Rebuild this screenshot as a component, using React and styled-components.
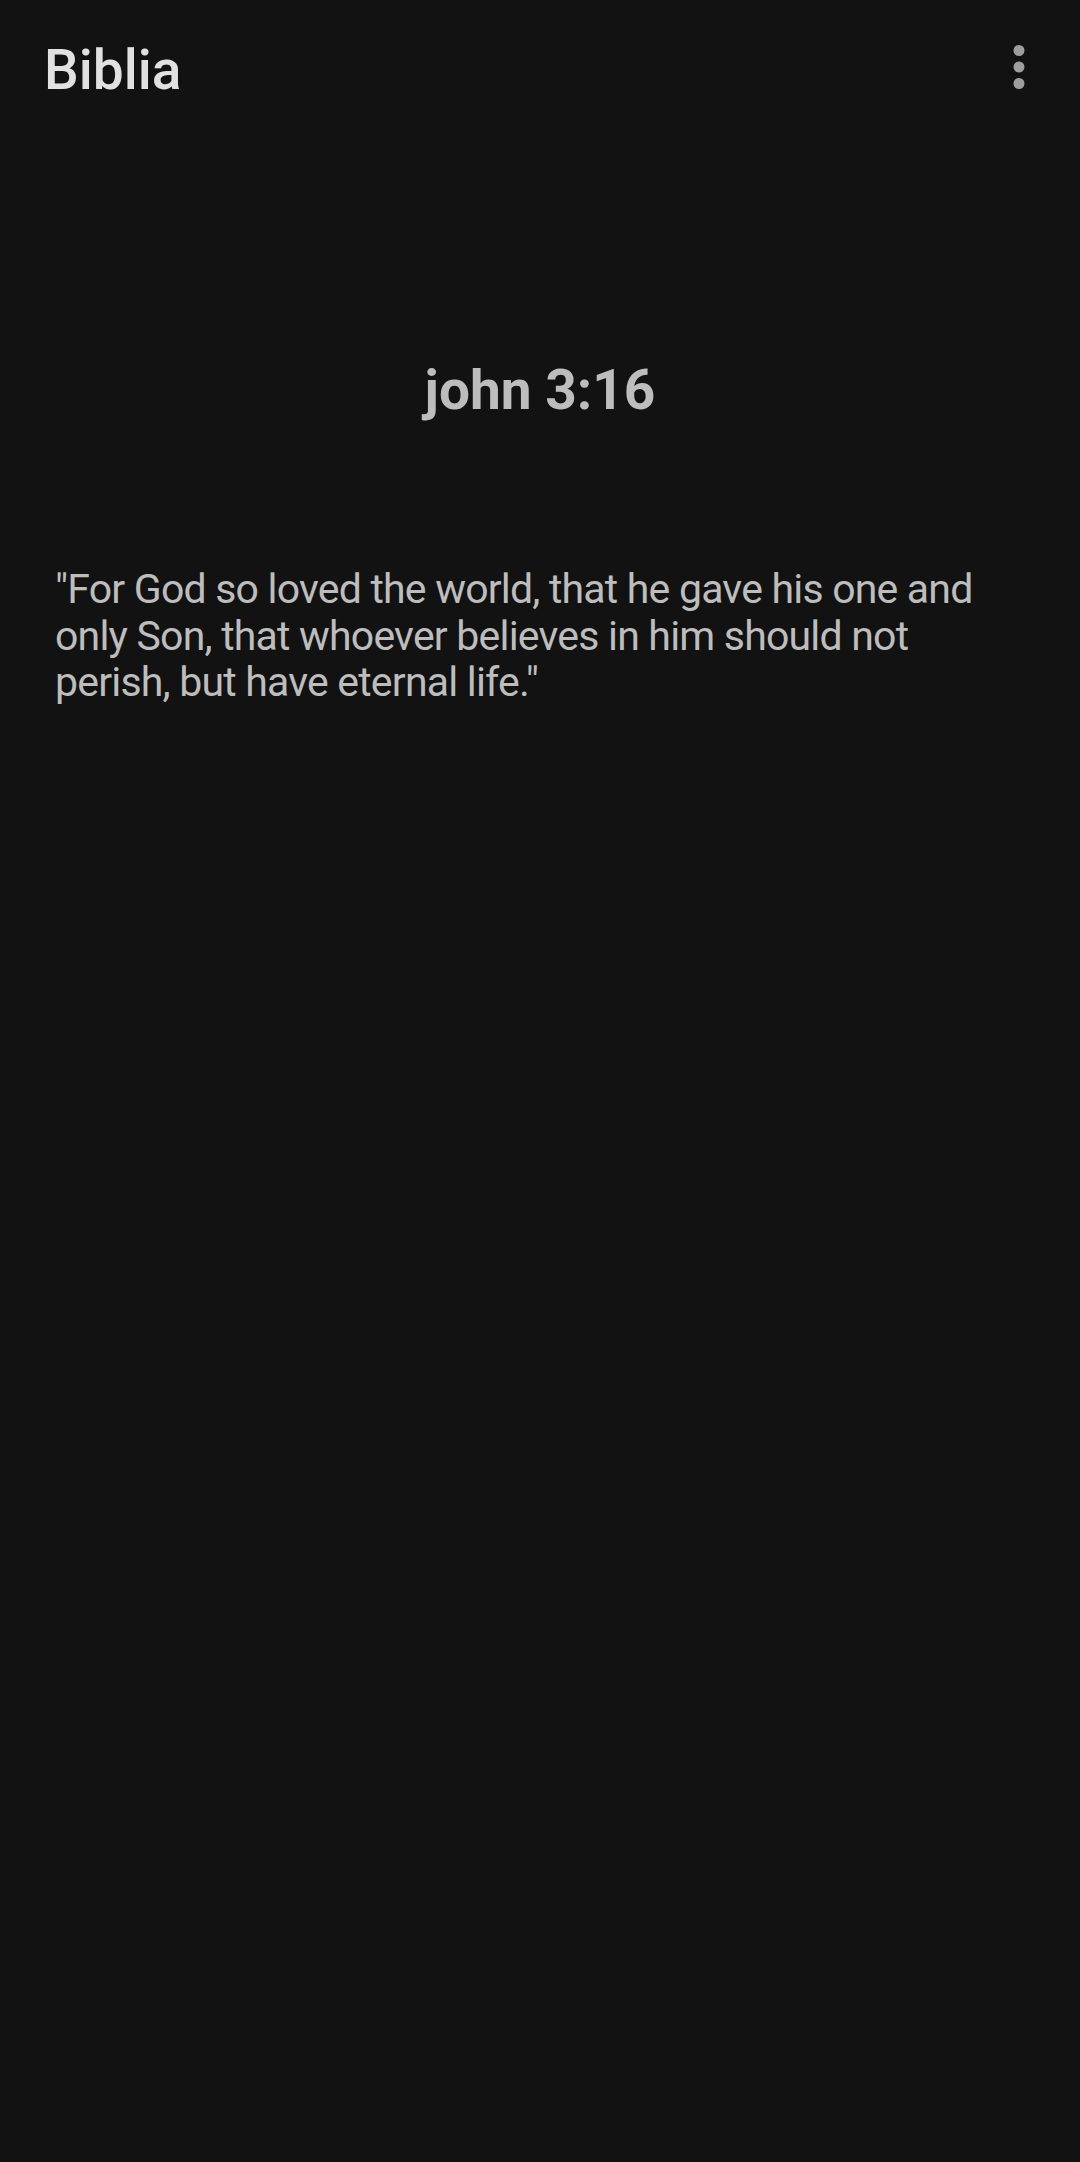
import React from 'react'
import styled, { createGlobalStyle } from 'styled-components'

const GlobalStyle = createGlobalStyle`
  html, body {
    margin: 0;
    padding: 0;
    background: #121212;
  }
  body {
    font-family: Roboto, "Noto Sans", "Liberation Sans", sans-serif;
  }
`

const Screen = styled.div`
  min-height: 2162px;
  background: #121212;
  display: flex;
  flex-direction: column;
`

const Toolbar = styled.header`
  height: 140px;
  display: flex;
  align-items: center;
  justify-content: space-between;
  padding: 0 28px 0 44px;
`

const Title = styled.h1`
  margin: 0;
  font-size: 55px;
  line-height: 64px;
  font-weight: 500;
  color: #e1e1e1;
`

const MenuButton = styled.button`
  width: 66px;
  height: 66px;
  margin-top: -6px;
  padding: 0;
  border: 0;
  background: transparent;
  display: flex;
  align-items: center;
  justify-content: center;
`

const Reference = styled.h2`
  margin: 218px 0 0;
  text-align: center;
  font-size: 55px;
  line-height: 64px;
  font-weight: 700;
  color: #bdbdbd;
`

const Verse = styled.p`
  margin: 144px 0 0;
  padding: 0 55px;
  font-size: 41px;
  line-height: 46.5px;
  letter-spacing: -0.8px;
  font-weight: 400;
  color: #bdbdbd;
`

function MoreVert() {
  return (
    <svg width="66" height="66" viewBox="0 0 24 24" fill="#9e9e9e">
      <circle cx="12" cy="6" r="2" />
      <circle cx="12" cy="12" r="2" />
      <circle cx="12" cy="18" r="2" />
    </svg>
  )
}

export default function App() {
  return (
    <>
      <GlobalStyle />
      <Screen>
        <Toolbar>
          <Title>Biblia</Title>
          <MenuButton aria-label="More options">
            <MoreVert />
          </MenuButton>
        </Toolbar>
        <Reference>john 3:16</Reference>
        <Verse>
          "For God so loved the world, that he gave his one and only Son, that whoever
          believes in him should not perish, but have eternal life."
        </Verse>
      </Screen>
    </>
  )
}
